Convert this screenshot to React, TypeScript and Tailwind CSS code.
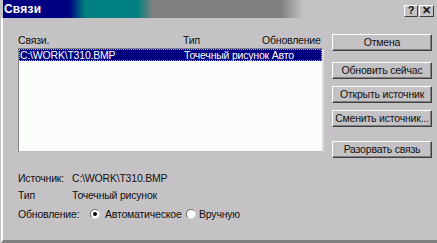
const buttons = [
  { label: 'Отмена', mt: 'mt-[16px]' },
  { label: 'Обновить сейчас', mt: 'mt-[11px]' },
  { label: 'Открыть источник', mt: 'mt-[7px]' },
  { label: 'Сменить источник...', mt: 'mt-[7px]' },
  { label: 'Разорвать связь', mt: 'mt-[14px]' },
];

function Button({ label, className }: { label: string; className: string }) {
  return (
    <div
      className={`${className} h-[17px] w-[100px] flex items-center justify-center bg-[#c4c2c5] border-t border-l border-t-white border-l-white border-r border-b border-r-[#404040] border-b-[#404040] shadow-[inset_-1px_-1px_0_#808080] text-[10.5px] tracking-[-0.2px] whitespace-nowrap leading-none text-[#111]`}
    >
      {label}
    </div>
  );
}

function Radio({ checked }: { checked?: boolean }) {
  return (
    <div className="w-[10px] h-[10px] shrink-0 rounded-full bg-white border border-t-[#707070] border-l-[#707070] border-r-[#e0e0e0] border-b-[#e0e0e0] flex items-center justify-center">
      {checked && <div className="w-[4px] h-[4px] rounded-full bg-black" />}
    </div>
  );
}

export default function App() {
  return (
    <div
      className="w-[437px] h-[243px] bg-[#c4c2c5] overflow-hidden flex flex-col text-[#111]"
      style={{ fontFamily: '"Liberation Sans", Arial, sans-serif' }}
    >
      {/* title bar */}
      <div className="h-[18px] flex items-center shrink-0">
        <div className="h-full w-[300px] ml-[3px] flex items-center bg-[linear-gradient(to_right,#000080_0px,#000080_66px,#008080_82px,#008080_134px,#808080_150px,#808080_278px,#c4c2c5_300px)]">
          <span className="ml-[1px] text-white font-bold text-[12px] tracking-[0.2px]">Связи</span>
        </div>
        <div className="ml-auto mr-[3px] mt-[3px] flex gap-[1px]">
          <div className="w-[14px] h-[12px] flex items-center justify-center bg-[#c4c2c5] border-t border-l border-white border-r border-b border-r-[#404040] border-b-[#404040] text-[11px] font-bold leading-none">
            ?
          </div>
          <div className="w-[15px] h-[12px] flex items-center justify-center bg-[#c4c2c5] border-t border-l border-white border-r border-b border-r-[#404040] border-b-[#404040] text-[11px] font-bold leading-none">
            ✕
          </div>
        </div>
      </div>

      {/* body */}
      <div className="flex-1 flex border-l-2 border-l-white border-b-[3px] border-b-[#808080] ml-[1px]">
        <div className="flex flex-col pl-[15px] w-[322px] text-[10.5px] tracking-[-0.2px] leading-[13px]">
          <div className="flex mt-[15px] h-[14px] items-center">
            <span className="w-[165px]">Связи.</span>
            <span className="w-[79px]">Тип</span>
            <span>Обновление</span>
          </div>
          <div className="mt-[1px] h-[105px] w-[306px] bg-[#fbfdfb] border-t border-l border-t-[#808080] border-l-[#808080] border-b-2 border-r-2 border-b-[#bfbfbf] border-r-[#dcdcdc]">
            <div className="h-[12px] bg-[#000080] text-white flex items-center outline outline-1 outline-dotted outline-offset-[-1px] outline-[#9ab]">
              <span className="w-[165px] pl-[1px]">C:\WORK\T310.BMP</span>
              <span className="whitespace-nowrap">Точечный рисунок Авто</span>
            </div>
          </div>
          <div className="mt-[18px] flex h-[14px] items-center">
            <span className="w-[54px]">Источник:</span>
            <span>C:\WORK\T310.BMP</span>
          </div>
          <div className="mt-[3px] flex h-[14px] items-center">
            <span className="w-[54px]">Тип</span>
            <span>Точечный рисунок</span>
          </div>
          <div className="mt-[5px] flex h-[14px] items-center whitespace-nowrap">
            <span className="w-[72px]">Обновление:</span>
            <Radio checked />
            <span className="ml-[5px] w-[81px]">Автоматическое</span>
            <Radio />
            <span className="ml-[3px]">Вручную</span>
          </div>
        </div>
        <div className="flex flex-col pl-[7px]">
          {buttons.map((b) => (
            <Button key={b.label} label={b.label} className={b.mt} />
          ))}
        </div>
      </div>
    </div>
  );
}
